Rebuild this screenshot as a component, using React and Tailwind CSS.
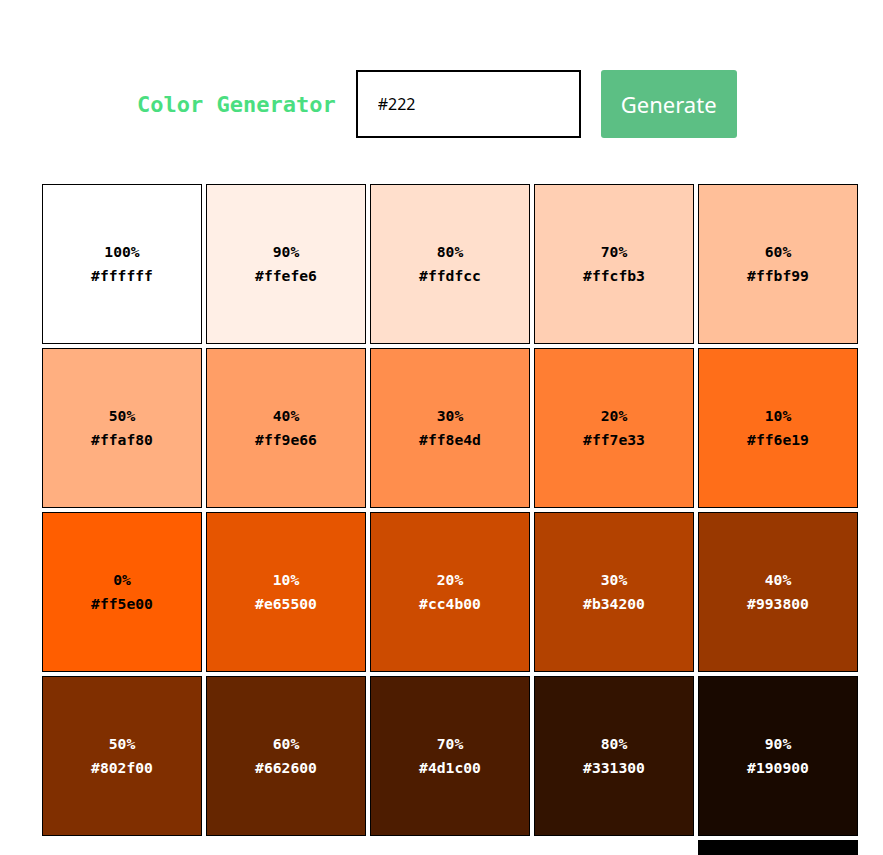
import React from "react";

const colors = [
  ["100%", "#ffffff", false],
  ["90%", "#ffefe6", false],
  ["80%", "#ffdfcc", false],
  ["70%", "#ffcfb3", false],
  ["60%", "#ffbf99", false],
  ["50%", "#ffaf80", false],
  ["40%", "#ff9e66", false],
  ["30%", "#ff8e4d", false],
  ["20%", "#ff7e33", false],
  ["10%", "#ff6e19", false],
  ["0%", "#ff5e00", false],
  ["10%", "#e65500", true],
  ["20%", "#cc4b00", true],
  ["30%", "#b34200", true],
  ["40%", "#993800", true],
  ["50%", "#802f00", true],
  ["60%", "#662600", true],
  ["70%", "#4d1c00", true],
  ["80%", "#331300", true],
  ["90%", "#190900", true],
  ["100%", "#000000", true],
];

export default function App() {
  return (
    <div className="bg-white min-h-screen">
      <div className="flex items-center pt-[70px] pl-[137px]">
        <h3 className="pt-[2px] text-[22px] font-bold text-[#4ade80] leading-none font-['DejaVu_Sans_Mono',monospace]">
          Color Generator
        </h3>
        <input
          type="text"
          placeholder="#222"
          className="ml-5 w-[225px] h-[68px] border-2 border-black pl-5 text-[16px] text-black placeholder:text-black outline-none font-['Noto_Sans',sans-serif]"
        />
        <button className="ml-5 h-[68px] w-[136px] rounded-[3px] bg-[#5cbf84] text-white text-[22px] font-['Noto_Sans',sans-serif]">
          Generate
        </button>
      </div>
      <div className="grid grid-cols-[repeat(5,160px)] gap-1 pl-[42px] mt-[46px] pb-8">
        {colors.map(([label, hex, light], i) => (
          <div
            key={i}
            className={`h-[160px] border border-black flex flex-col items-center justify-center font-bold text-[14.7px] leading-6 font-['DejaVu_Sans_Mono',monospace] ${
              light ? "text-white" : "text-black"
            } ${i === 20 ? "col-start-5" : ""}`}
            style={{ backgroundColor: hex }}
          >
            <p>{label}</p>
            <p>{hex}</p>
          </div>
        ))}
      </div>
    </div>
  );
}
